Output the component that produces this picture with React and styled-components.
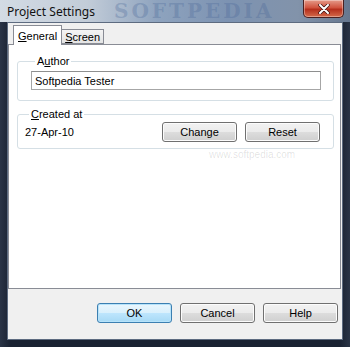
import React from 'react'
import styled, { createGlobalStyle } from 'styled-components'

const Global = createGlobalStyle`
  html, body { margin: 0; padding: 0; background: #1b2333; }
  * { box-sizing: border-box; }
`

const Window = styled.div`
  width: 350px;
  height: 347px;
  display: flex;
  flex-direction: column;
  background: linear-gradient(90deg, #2a3446 0%, #1a2232 3%, #1a2232 97%, #2a3446 100%);
  font-family: "Liberation Sans", Arial, sans-serif;
  font-size: 11px;
  color: #000;
  overflow: hidden;
`

const TitleBar = styled.div`
  height: 22px;
  flex: 0 0 22px;
  display: flex;
  align-items: center;
  padding-left: 7px;
  position: relative;
  background: linear-gradient(90deg, #d3dbe4 0%, #c2ccd8 25%, #8ea3be 45%, #7d93b2 65%, #8293aa 85%, #66778f 100%);
`

const Title = styled.span`
  font-family: "Noto Sans", "Open Sans", sans-serif;
  font-size: 12px;
  color: #111;
  position: relative;
  z-index: 1;
`

const Watermark = styled.span`
  position: absolute;
  left: 114px;
  top: 2px;
  line-height: 18px;
  font-family: "DejaVu Serif", serif;
  font-weight: bold;
  font-size: 20px;
  letter-spacing: 3px;
  color: rgba(70, 100, 150, 0.3);
`

const Close = styled.div`
  position: absolute;
  right: 6px;
  top: 0;
  width: 41px;
  height: 18px;
  border: 1px solid #4a2020;
  border-top: none;
  border-radius: 0 0 5px 5px;
  background: linear-gradient(180deg, #e59b8a 0%, #d0533e 45%, #b52f1c 55%, #d46a4a 100%);
  display: flex;
  align-items: center;
  justify-content: center;
  box-shadow: inset 0 0 0 1px rgba(255, 255, 255, 0.35);
`

const Client = styled.div`
  flex: 1;
  margin: 0 7px 7px 7px;
  background: #f0f0f0;
  border: 1px solid #5d6b80;
  display: flex;
  flex-direction: column;
`

const TabStrip = styled.div`
  display: flex;
  align-items: flex-end;
  height: 21px;
  padding-left: 5px;
`

const Tab = styled.div`
  height: ${p => (p.$active ? '20px' : '15px')};
  padding: 0 ${p => (p.$active ? '4px' : '3px')};
  margin-bottom: ${p => (p.$active ? '-1px' : '0')};
  background: ${p => (p.$active ? '#fff' : 'linear-gradient(180deg, #f4f4f4, #e4e4e4)')};
  border: 1px solid #898c95;
  border-bottom: ${p => (p.$active ? 'none' : '1px solid #898c95')};
  border-left: ${p => (p.$noLeft ? 'none' : '1px solid #898c95')};
  display: flex;
  align-items: center;
  position: relative;
  z-index: ${p => (p.$active ? 2 : 1)};
  u { text-decoration: underline; }
`

const Panel = styled.div`
  height: 245px;
  margin-right: 1px;
  background: #fff;
  border: 1px solid #898c95;
  padding: 10px 6px 0 8px;
  display: flex;
  flex-direction: column;
  gap: 7px;
  position: relative;
`

const Group = styled.fieldset`
  margin: 0;
  border: 1px solid #d5dfe5;
  border-radius: 3px;
  padding: ${p => p.$pad};
  display: flex;
  align-items: center;
  min-height: ${p => p.$h};
`

const Legend = styled.legend`
  padding: 0 2px;
  margin-left: 4px;
  color: #000;
`

const Input = styled.input`
  flex: 1;
  height: 19px;
  border: 1px solid #a6a6a6;
  border-top-color: #8e8f8f;
  padding: 0 3px;
  font-family: "Liberation Sans", Arial, sans-serif;
  font-size: 11px;
  color: #000;
  outline: none;
`

const DateText = styled.span`
  flex: 1;
`

const Button = styled.button`
  width: 75px;
  height: 20px;
  padding: 0;
  border: 1px solid ${p => (p.$default ? '#3c7fb1' : '#707070')};
  border-radius: 3px;
  background: ${p =>
    p.$default
      ? 'linear-gradient(180deg, #eaf6fd 0%, #d9f0fc 50%, #bee6fd 50%, #a7d9f5 100%)'
      : 'linear-gradient(180deg, #f2f2f2 0%, #ebebeb 50%, #dddddd 50%, #cfcfcf 100%)'};
  box-shadow: inset 0 0 0 1px ${p => (p.$default ? '#b7e3fa' : '#fcfcfc')};
  font-family: "Liberation Sans", Arial, sans-serif;
  font-size: 11px;
  color: #000;
`

const ButtonRow = styled.div`
  display: flex;
  gap: 8px;
`

const Footer = styled.div`
  flex: 1;
  display: flex;
  justify-content: flex-end;
  align-items: flex-start;
  padding: 14px 4px 0 0;
`

const Faint = styled.span`
  position: absolute;
  left: 200px;
  top: 104px;
  font-size: 10px;
  color: rgba(0, 0, 0, 0.12);
`

export default function App() {
  return (
    <>
      <Global />
      <Window>
        <TitleBar>
          <Title>Project Settings</Title>
          <Watermark>SOFTPEDIA</Watermark>
          <Close>
            <svg width="12" height="10" viewBox="0 0 12 10">
              <path d="M2 1 L10 9 M10 1 L2 9" stroke="#3a1010" strokeWidth="3.4" strokeLinecap="round" />
              <path d="M2 1 L10 9 M10 1 L2 9" stroke="#fff" strokeWidth="2" strokeLinecap="round" />
            </svg>
          </Close>
        </TitleBar>
        <Client>
          <TabStrip>
            <Tab $active><span><u>G</u>eneral</span></Tab>
            <Tab $noLeft><span><u>S</u>creen</span></Tab>
          </TabStrip>
          <Panel>
            <Group $pad="4px 12px 9px 13px" $h="46px">
              <Legend>A<u>u</u>thor</Legend>
              <Input defaultValue="Softpedia Tester" />
            </Group>
            <Group $pad="2px 13px 6px 7px" $h="36px">
              <Legend><u>C</u>reated at</Legend>
              <DateText>27-Apr-10</DateText>
              <ButtonRow>
                <Button>Change</Button>
                <Button>Reset</Button>
              </ButtonRow>
            </Group>
            <Faint>www.softpedia.com</Faint>
          </Panel>
          <Footer>
            <ButtonRow>
              <Button $default>OK</Button>
              <Button>Cancel</Button>
              <Button>Help</Button>
            </ButtonRow>
          </Footer>
        </Client>
      </Window>
    </>
  )
}
